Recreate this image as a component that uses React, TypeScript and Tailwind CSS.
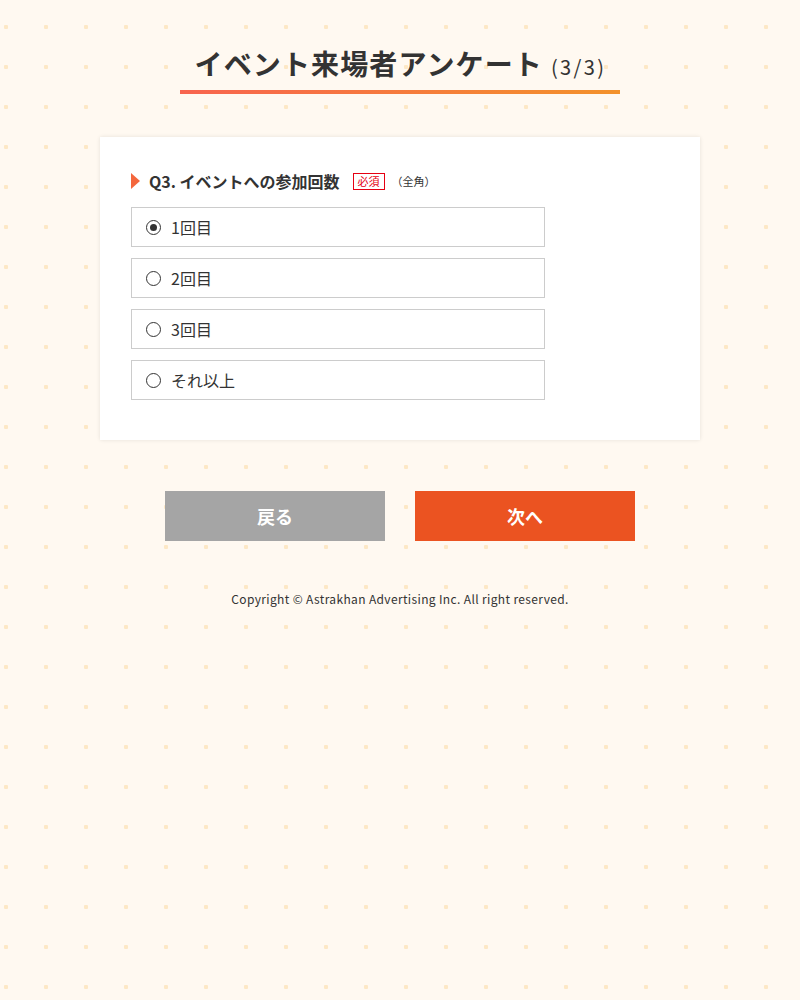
import { useState } from 'react'

const options = ['1回目', '2回目', '3回目', 'それ以上']

export default function App() {
  const [selected, setSelected] = useState(0)

  return (
    <div
      className="min-h-[1000px] w-full bg-[#fff9f1] bg-[radial-gradient(circle,#fde8c6_2px,transparent_2.5px)] bg-[size:40px_40px] bg-[position:-14px_7px] text-[#333] font-['Noto_Sans_CJK_JP','Noto_Sans',sans-serif]"
    >
      {/* タイトル */}
      <div className="flex justify-center pt-[41px]">
        <h1 className="flex items-baseline gap-2 border-b-4 border-transparent pl-[15px] pr-[14px] pb-[5px] [border-image:linear-gradient(90deg,#f8644f,#f3922b)_1]">
          <span className="text-[28px] font-bold leading-[44px] tracking-[0.04em]">イベント来場者アンケート</span>
          <span className="text-[20px] leading-none tracking-[0.12em]">(3/3)</span>
        </h1>
      </div>

      {/* 設問カード */}
      <div className="mx-auto mt-[43px] w-[600px] bg-white px-[31px] pt-[32px] pb-[40px] shadow-[0_0_4px_rgba(0,0,0,0.1)]">
        <div className="flex items-center">
          <span className="h-0 w-0 border-y-[8px] border-l-[9px] border-y-transparent border-l-[#f4673d]" />
          <span className="ml-[9px] text-[16px] font-bold leading-6">Q3. イベントへの参加回数</span>
          <span className="ml-[13px] border border-[#e60012] px-[4px] text-[11px] leading-[15px] text-[#e60012]">必須</span>
          <span className="ml-[7px] text-[11px] leading-4 text-[#333]">（全角）</span>
        </div>

        <div className="mt-[14px] flex w-[414px] flex-col gap-[11px]">
          {options.map((label, i) => (
            <label
              key={label}
              onClick={() => setSelected(i)}
              className="flex h-10 cursor-pointer items-center border border-[#cccccc] bg-white pl-[14px]"
            >
              <span className="flex h-[15px] w-[15px] items-center justify-center rounded-full border border-[#333]">
                {selected === i && <span className="h-[7px] w-[7px] rounded-full bg-[#333]" />}
              </span>
              <span className="ml-[10px] text-[16px] leading-6">{label}</span>
            </label>
          ))}
        </div>
      </div>

      {/* ボタン */}
      <div className="mt-[51px] flex justify-center gap-[30px]">
        <button type="button" className="flex h-[50px] w-[220px] items-center justify-center bg-[#a5a5a5] text-[18px] font-bold text-white">
          戻る
        </button>
        <button type="button" className="flex h-[50px] w-[220px] items-center justify-center bg-[#eb5321] text-[18px] font-bold text-white">
          次へ
        </button>
      </div>

      <p className="mt-[48px] text-center text-[12px] leading-5 tracking-[0.03em] text-[#333]">
        Copyright © Astrakhan Advertising Inc. All right reserved.
      </p>
    </div>
  )
}
